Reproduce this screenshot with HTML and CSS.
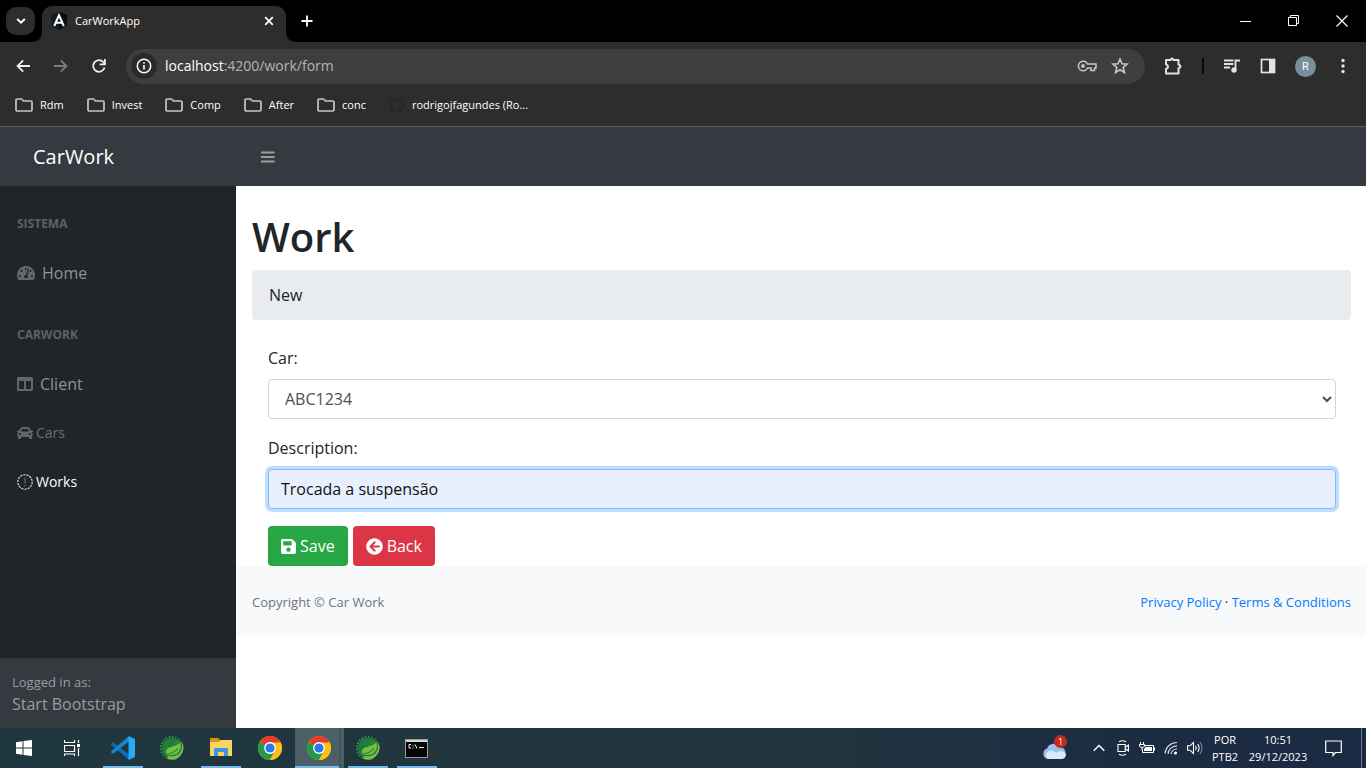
FILE: index.html
```html
<!DOCTYPE html>
<html lang="en">
<head>
<meta charset="utf-8">
<title>CarWorkApp</title>
<link rel="stylesheet" href="styles.css">
</head>
<body>
<svg class="defs" aria-hidden="true">
  <defs>
    <linearGradient id="spring-fill" x1="0" y1="0" x2="1" y2="1"><stop offset=".4" stop-color="#1d7d3c"/><stop offset=".75" stop-color="#77bf43"/></linearGradient>
    <symbol id="folder" viewBox="0 0 18 14"><path d="M1 2.200Q1 1 2.200 1H6.500L8.500 3H15.800Q17 3 17 4.200V11.800Q17 13 15.800 13H2.200Q1 13 1 11.800Z" fill="none" stroke="#c7c7c7" stroke-width="1.700"/></symbol>
    <symbol id="chrome" viewBox="0 0 24 24">
      <circle cx="12" cy="12" r="12" fill="#fbc116"/>
      <path d="M12 12 1.600 6A12 12 0 0 1 22.400 6Z" fill="#e33b2e"/>
      <path d="M12 12 1.600 6A12 12 0 0 0 12 24L17.200 15Z" fill="#229a48"/>
      <path d="M12 6.500H22.600A12 12 0 0 1 12 24L17 14.500Z" fill="#fbc116"/>
      <circle cx="12" cy="12" r="5.900" fill="#fff"/><circle cx="12" cy="12" r="4.600" fill="#2a78e8"/>
    </symbol>
    <symbol id="spring" viewBox="0 0 24 24">
      <circle cx="12" cy="12" r="10" fill="url(#spring-fill)"/>
      <path d="M7 21.700A10.900 10.900 0 1 1 20.500 5.300" fill="none" stroke="#2c8a3c" stroke-width="2.200" stroke-dasharray="1.800 1.400"/>
      <path d="M22 6A12 12 0 0 1 7 22.800L12 12Z" fill="#77bf43"/>
      <path d="M5.500 18C3.500 8 15 12.500 20.500 5 23 11 20.500 18.500 13.500 19.500 10 20 7 19.500 5.500 18Z" fill="#77bf43" stroke="#1d7d3c" stroke-width="1.300"/>
      <path d="M6 18.300C11 17.800 15.500 16 18 12" fill="none" stroke="#2c8a3c" stroke-width="1.200"/>
    </symbol>
  </defs>
</svg>

<header class="browser">
  <div class="tabstrip">
    <button class="tab-search" aria-label="Search tabs"><svg width="10" height="8" viewBox="0 0 10 8"><path d="M1.200 2 5 5.700 8.800 2" fill="none" stroke="#fff" stroke-width="2"/></svg></button>
    <div class="tab">
      <svg width="18" height="18" viewBox="0 0 18 18"><path d="M9 0 17.500 3 16.200 14 9 18 1.800 14 .5 3Z" fill="#151a28"/><path d="M9 0 17.500 3 16.200 14 9 18Z" fill="#080c18"/><path d="M4.200 14 9 3.300 13.800 14M6 10.700H12" fill="none" stroke="#fff" stroke-width="2"/></svg>
      <span class="tab-title">CarWorkApp</span>
      <button class="bare" aria-label="Close tab"><svg width="10" height="10" viewBox="0 0 10 10"><path d="M1.200 1.200 8.800 8.800M8.800 1.200 1.200 8.800" stroke="#fff" stroke-width="1.800"/></svg></button>
    </div>
    <button class="bare new-tab" aria-label="New tab"><svg width="12" height="12" viewBox="0 0 12 12"><path d="M6 .5V11.500M.5 6H11.500" stroke="#fff" stroke-width="1.800"/></svg></button>
    <div class="window-controls">
      <button class="bare" aria-label="Minimize"><svg width="12" height="12" viewBox="0 0 12 12"><path d="M0 6.500H11" stroke="#fff"/></svg></button>
      <button class="bare" aria-label="Restore"><svg width="12" height="12" viewBox="0 0 12 12"><path d="M.5 2.500H8.500V10.500H.5ZM2.500 2.500V.5H10.500V8.500H8.500" fill="none" stroke="#fff"/></svg></button>
      <button class="bare" aria-label="Close"><svg width="12" height="12" viewBox="0 0 12 12"><path d="M.5 .5 11.500 11.500M11.500 .5 .5 11.500" stroke="#fff" stroke-width="1.200"/></svg></button>
    </div>
  </div>

  <div class="toolbar">
    <button class="bare tool" aria-label="Back"><svg width="14" height="14" viewBox="0 0 14 14"><path d="M14 7H2M7.200 1.300 1.500 7 7.200 12.700" fill="none" stroke="#eee" stroke-width="1.800"/></svg></button>
    <button class="bare tool" aria-label="Forward"><svg width="14" height="14" viewBox="0 0 14 14"><path d="M0 7H12M6.800 1.300 12.500 7 6.800 12.700" fill="none" stroke="#7b7b7b" stroke-width="1.800"/></svg></button>
    <button class="bare tool" aria-label="Reload"><svg width="14" height="14" viewBox="0 0 14 14"><path d="M12.600 8.500A5.800 5.800 0 1 1 11.500 3.300L12.800 4.800" fill="none" stroke="#eee" stroke-width="1.800"/><path d="M13.800 0V6.200H7.600V4.500H12V0Z" fill="#eee"/></svg></button>
    <div class="omnibox">
      <button class="site-info" aria-label="Site information"><svg width="16" height="16" viewBox="0 0 16 16"><circle cx="8" cy="8" r="6.700" fill="none" stroke="#fff" stroke-width="1.500"/><path d="M8 7V11.600M8 4.200V5.800" stroke="#fff" stroke-width="1.600"/></svg></button>
      <span class="url"><b>localhost</b>:4200/work/form</span>
      <button class="bare" aria-label="Passwords"><svg width="20" height="12" viewBox="0 0 20 12"><path d="M10.500 4H19V8H17.500V10.500H14V8H10.500A4.800 4.800 0 1 1 10.500 4Z" fill="none" stroke="#c7c7c7" stroke-width="1.500"/><circle cx="6" cy="6" r="1.900" fill="#c7c7c7"/></svg></button>
      <button class="bare" aria-label="Bookmark this page"><svg width="18" height="18" viewBox="0 0 18 18"><path d="M9 2 11 6.700 16 7.100 12.200 10.400 13.400 15.500 9 12.800 4.600 15.500 5.800 10.400 2 7.100 7 6.700Z" fill="none" stroke="#c7c7c7" stroke-width="1.600"/></svg></button>
    </div>
    <div class="extensions">
      <button class="bare" aria-label="Extensions"><svg width="20" height="20" viewBox="0 0 20 20"><path d="M3 4H7.500Q9 1 10.500 4H15.500V8.500Q19.500 10.500 15.500 12.500V17.500H3V13.200Q7 10.700 3 8.200Z" fill="none" stroke="#e3e3e3" stroke-width="2" stroke-linejoin="round"/></svg></button>
      <i class="divider"></i>
      <button class="bare" aria-label="Media"><svg width="18" height="16" viewBox="0 0 18 16"><path d="M1 2.500H10.500M1 6H10.500M1 9.500H7M12.500 12V2.500H17" fill="none" stroke="#e3e3e3" stroke-width="1.800"/><circle cx="11" cy="12" r="2.700" fill="#e3e3e3"/></svg></button>
      <button class="bare" aria-label="Side panel"><svg width="16" height="16" viewBox="0 0 16 16"><rect x="1.500" y="1.500" width="13" height="13" fill="none" stroke="#e3e3e3" stroke-width="1.700"/><path d="M9 1H15V15H9Z" fill="#e3e3e3"/></svg></button>
      <button class="avatar" aria-label="Profile">R</button>
      <button class="bare more" aria-label="Menu"><svg width="4" height="16" viewBox="0 0 4 16"><g fill="#e3e3e3"><circle cx="2" cy="2.500" r="1.700"/><circle cx="2" cy="8" r="1.700"/><circle cx="2" cy="13.500" r="1.700"/></g></svg></button>
    </div>
  </div>

  <nav class="bookmarks" aria-label="Bookmarks">
    <a href="#"><svg width="18" height="14"><use href="#folder"/></svg>Rdm</a>
    <a href="#"><svg width="18" height="14"><use href="#folder"/></svg>Invest</a>
    <a href="#"><svg width="18" height="14"><use href="#folder"/></svg>Comp</a>
    <a href="#"><svg width="18" height="14"><use href="#folder"/></svg>After</a>
    <a href="#"><svg width="18" height="14"><use href="#folder"/></svg>conc</a>
    <a href="#"><svg width="16" height="16" viewBox="0 0 16 16"><path fill="#24292f" d="M8 0C3.580 0 0 3.580 0 8c0 3.540 2.290 6.530 5.470 7.590.4.070.55-.17.55-.38 0-.19-.01-.82-.01-1.490-2.010.37-2.530-.49-2.690-.94-.09-.23-.48-.94-.82-1.130-.28-.15-.68-.52-.01-.53.63-.01 1.080.58 1.230.82.720 1.210 1.870.87 2.330.66.070-.52.280-.87.510-1.070-1.780-.2-3.640-.89-3.640-3.950 0-.87.310-1.590.82-2.150-.08-.2-.36-1.020.08-2.120 0 0 .67-.21 2.200.82.640-.18 1.320-.27 2-.27s1.360.09 2 .27c1.530-1.040 2.200-.82 2.200-.82.440 1.100.16 1.920.08 2.120.51.560.82 1.270.82 2.150 0 3.070-1.870 3.750-3.650 3.950.290.25.54.73.54 1.480 0 1.070-.01 1.930-.01 2.200 0 .21.150.46.55.38A8.010 8.010 0 0 0 16 8c0-4.420-3.580-8-8-8Z"/></svg>rodrigojfagundes (Ro...</a>
  </nav>
</header>

<div class="app">
  <nav class="topnav">
    <a class="brand" href="#">CarWork</a>
    <button class="bare" aria-label="Toggle sidebar"><svg width="14" height="14" viewBox="0 0 14 14"><path d="M0 2.500H13.500M0 7H13.500M0 11.500H13.500" stroke="#9a9da0" stroke-width="2"/></svg></button>
  </nav>
  <div class="columns">
    <aside class="sidebar">
      <nav class="menu">
        <h2>SISTEMA</h2>
        <a class="wide" href="#"><svg width="18" height="16" viewBox="0 0 576 512" fill="#646668"><path d="M288 32C128.940 32 0 160.940 0 320c0 52.800 14.250 102.260 39.060 144.800 5.610 9.620 16.300 15.200 27.440 15.200h443c11.140 0 21.830-5.580 27.440-15.200C561.750 422.260 576 372.800 576 320c0-159.060-128.940-288-288-288zm0 64c14.710 0 26.580 10.130 30.320 23.650-1.110 2.260-2.640 4.230-3.450 6.670l-9.220 27.670c-5.130 3.490-10.970 6.010-17.640 6.010-17.670 0-32-14.330-32-32S270.330 96 288 96zM96 384c-17.670 0-32-14.330-32-32s14.330-32 32-32 32 14.330 32 32-14.330 32-32 32zm48-160c-17.670 0-32-14.330-32-32s14.330-32 32-32 32 14.330 32 32-14.330 32-32 32zm246.770-72.410l-61.330 184C343.130 347.330 352 364.540 352 384c0 11.720-3.380 22.550-8.880 32H232.880c-5.500-9.450-8.880-20.280-8.880-32 0-33.940 26.500-61.430 59.900-63.590l61.340-184.010c4.170-12.560 17.730-19.450 30.360-15.170 12.570 4.190 19.350 17.790 15.170 30.360zm14.660 57.200l15.520-46.550c3.470-1.290 7.130-2.230 11.050-2.230 17.670 0 32 14.330 32 32s-14.330 32-32 32c-11.380-.01-20.890-6.280-26.570-15.220zM480 384c-17.670 0-32-14.330-32-32s14.330-32 32-32 32 14.330 32 32-14.330 32-32 32z"/></svg>Home</a>
        <h2>CARWORK</h2>
        <a class="wide" href="#"><svg width="16" height="16" viewBox="0 0 512 512" fill="#646668"><path d="M464 32H48C21.490 32 0 53.490 0 80v352c0 26.510 21.490 48 48 48h416c26.510 0 48-21.490 48-48V80c0-26.510-21.490-48-48-48zM224 416H64V160h160v256zm224 0H288V160h160v256z"/></svg>Client</a>
        <a class="dim" href="#"><svg width="16" height="16" viewBox="0 0 512 512" fill="#646668"><path d="M499.990 176h-59.870l-16.640-41.600C406.380 91.630 365.570 64 319.500 64h-127c-46.060 0-86.880 27.630-103.990 70.400L71.870 176H12.010C4.200 176-1.530 183.340.37 190.910l6 24C7.700 220.250 12.500 224 18.010 224h20.070C24.650 235.730 16 252.780 16 272v48c0 16.120 6.160 30.670 16 41.930V416c0 17.670 14.330 32 32 32h32c17.670 0 32-14.330 32-32v-32h256v32c0 17.670 14.330 32 32 32h32c17.670 0 32-14.330 32-32v-54.070c9.840-11.250 16-25.800 16-41.930v-48c0-19.220-8.650-36.270-22.070-48H494c5.510 0 10.310-3.750 11.640-9.090l6-24c1.890-7.570-3.840-14.910-11.650-14.910zm-352.060-17.830c7.290-18.220 24.940-30.170 44.570-30.170h127c19.630 0 37.280 11.950 44.570 30.170L384 208H128l19.930-49.830zM96 319.800c-19.200 0-32-12.760-32-31.900S76.800 256 96 256s48 28.710 48 47.850-28.800 15.950-48 15.950zm320 0c-19.200 0-48 3.190-48-15.950S396.800 256 416 256s32 12.760 32 31.900-12.800 31.900-32 31.900z"/></svg>Cars</a>
        <a class="active" href="#"><svg width="16" height="16" viewBox="0 0 16 16"><circle cx="8" cy="8" r="7.200" fill="none" stroke="#e6e6e6" stroke-width="1.100" stroke-dasharray="2.200 1"/><path d="M8 4V9.500M8 11V12.200" stroke="#75787b"/></svg>Works</a>
      </nav>
      <div class="user"><small>Logged in as:</small><span>Start Bootstrap</span></div>
    </aside>
    <div class="content">
      <main>
        <h1>Work</h1>
        <div class="crumb">New</div>
        <form>
          <label for="car">Car:</label>
          <select id="car"><option>ABC1234</option></select>
          <label for="description">Description:</label>
          <input id="description" class="focused" type="text" value="Trocada a suspensão">
          <div class="actions">
            <button class="btn save" type="button"><svg width="15" height="17" viewBox="0 0 448 512" fill="#fff"><path d="M433.941 129.941l-83.882-83.882A48 48 0 0 0 316.118 32H48C21.490 32 0 53.490 0 80v352c0 26.510 21.490 48 48 48h352c26.510 0 48-21.490 48-48V163.882a48 48 0 0 0-14.059-33.941zM224 416c-35.346 0-64-28.654-64-64 0-35.346 28.654-64 64-64s64 28.654 64 64c0 35.346-28.654 64-64 64zm96-304.520V212c0 6.627-5.373 12-12 12H76c-6.627 0-12-5.373-12-12V108c0-6.627 5.373-12 12-12h228.520c3.183 0 6.235 1.264 8.485 3.515l3.480 3.480A11.996 11.996 0 0 1 320 111.480z"/></svg>Save</button>
            <button class="btn back" type="button"><svg width="17" height="17" viewBox="0 0 512 512" fill="#fff"><path d="M256 504C119 504 8 393 8 256S119 8 256 8s248 111 248 248-111 248-248 248zm28.900-143.600L209.400 288H392c13.300 0 24-10.700 24-24v-16c0-13.300-10.700-24-24-24H209.400l75.500-72.400c9.700-9.300 9.900-24.800.4-34.300l-11-10.900c-9.400-9.400-24.600-9.400-33.900 0L107.700 239c-9.400 9.400-9.400 24.600 0 33.900l132.700 132.700c9.400 9.400 24.600 9.400 33.900 0l11-10.900c9.500-9.500 9.300-25-.4-34.300z"/></svg>Back</button>
          </div>
        </form>
      </main>
      <footer class="footer">
        <span>Copyright © Car Work</span>
        <div class="legal"><a href="#">Privacy Policy</a> · <a href="#">Terms &amp; Conditions</a></div>
      </footer>
    </div>
  </div>
</div>

<div class="taskbar">
  <div class="system">
    <button class="bare" aria-label="Start"><svg width="16" height="16" viewBox="0 0 16 16"><path d="M0 2.200 6.500 1.200V7.500H0ZM7.500 1 16 0V7.500H7.500ZM0 8.500H6.500V14.800L0 13.800ZM7.500 8.500H16V16L7.500 15Z" fill="#fff"/></svg></button>
    <button class="bare" aria-label="Task view"><svg width="16" height="16" viewBox="0 0 16 16"><path d="M.5 0V2.500H10.500V0M.5 5.500H10.500V11.500H.5ZM.5 16V14H10.500V16M14.500 0V3M14.500 8V16" fill="none" stroke="#fff" stroke-width="1.200"/><path d="M13 4H16V7H13Z" fill="#fff"/></svg></button>
  </div>
  <div class="pinned">
    <button class="bare open" aria-label="Visual Studio Code"><svg width="24" height="24" viewBox="0 0 24 24"><path d="M2 6.300 18 18.500V24L.3 8.700Q-.2 8 .5 7.300Z" fill="#0b70b8"/><path d="M2 17.700 18 5.500V0L.3 15.300Q-.2 16 .5 16.700Z" fill="#1687cf"/><path d="M17.500 0 24 3V21L17.500 24Z" fill="#27a9f3"/></svg></button>
    <button class="bare" aria-label="Spring Tools"><svg width="24" height="24"><use href="#spring"/></svg></button>
    <button class="bare open" aria-label="File Explorer"><svg width="22" height="20" viewBox="0 0 22 20"><path d="M0 0H8L10 2H21V10H0Z" fill="#d9960e"/><path d="M0 4H9L11 2H22V18H0Z" fill="#fbd265"/><path d="M4 18V11Q4 10 5 10H17Q18 10 18 11V18H14V14H8V18Z" fill="#3c97dc"/></svg></button>
    <button class="bare" aria-label="Chrome"><svg width="24" height="24"><use href="#chrome"/></svg></button>
    <button class="bare open current" aria-label="Chrome, CarWorkApp"><svg width="24" height="24"><use href="#chrome"/></svg></button>
    <button class="bare open" aria-label="Spring Tools window"><svg width="24" height="24"><use href="#spring"/></svg></button>
    <button class="bare open" aria-label="Command Prompt"><svg width="23" height="19" viewBox="0 0 23 19"><rect x=".5" y=".5" width="22" height="18" fill="#050505" stroke="#9a9a9a"/><path d="M1 1H22V3H1Z" fill="#d6d6d6"/><path d="M6 5.500H4V9H6M8 6V7M8 8.500V9.500M10 5.500 12 9.500M14 8.500H19" fill="none" stroke="#eee"/></svg></button>
  </div>
  <div class="tray">
    <button class="bare weather" aria-label="Weather"><svg width="26" height="24" viewBox="0 0 26 24"><path d="M5.500 23A5.500 5.500 0 0 1 5 12.500 7.500 7.500 0 0 1 18.500 11.500 6 6 0 0 1 20 23Z" fill="#9cc0f2"/><path d="M5.500 23A5 5 0 0 1 6 15.500 6 6 0 0 1 14 17 6 6 0 0 1 24 19 5 5 0 0 1 20 23Z" fill="#dce9fb"/></svg><span class="count">1</span></button>
    <button class="bare" aria-label="Hidden icons"><svg width="12" height="8" viewBox="0 0 12 8"><path d="M.7 6.700 6 1.400 11.300 6.700" fill="none" stroke="#fff" stroke-width="1.400"/></svg></button>
    <button class="bare" aria-label="Meet Now"><svg width="12" height="16" viewBox="0 0 12 16"><path d="M2 1.800Q5.500-.2 9 1.800M2 14.200Q5.500 16.200 9 14.200M1 4.500H8.200V11.500H1ZM8.500 7 11.400 5V11L8.500 9" fill="none" stroke="#fff" stroke-width="1.100"/></svg></button>
    <button class="bare" aria-label="Battery"><svg width="16" height="12" viewBox="0 0 16 12"><path d="M5.500 3.500H14.500V10.500H3.500V7M1.500 0V2M4.500 0V2M.5 2.500H5.500V4Q5 5.500 3 5.500 1 5.500.5 4ZM3 5.500V8" fill="none" stroke="#fff"/><path d="M6 5H13V9H5V7L6 6ZM15 5.500H16V8.500H15Z" fill="#fff"/></svg></button>
    <button class="bare" aria-label="Network"><svg width="14" height="14" viewBox="0 0 14 14"><path d="M1 12.500A12 12 0 0 1 13 1.500M4 13A9 9 0 0 1 13 4.800M7 13A6 6 0 0 1 13 8" fill="none" stroke="#dce0e5" stroke-width="1.200"/><circle cx="11.500" cy="12" r="1.600" fill="#fff"/></svg></button>
    <button class="bare" aria-label="Volume"><svg width="16" height="14" viewBox="0 0 16 14"><path d="M.6 4.800H3L6.500 1.500V12.500L3 9.200H.6ZM8.500 4.800Q10 7 8.500 9.200M10.700 3Q13.500 7 10.700 11" fill="none" stroke="#fff" stroke-width="1.100"/><path d="M13 1Q17 7 13 13" fill="none" stroke="#8490a0"/></svg></button>
    <button class="bare lang"><span>POR</span><span>PTB2</span></button>
    <button class="bare clock"><span>10:51</span><span>29/12/2023</span></button>
    <button class="bare notes" aria-label="Notifications"><svg width="17" height="17" viewBox="0 0 17 17"><path d="M.7 1H16.300V12.500H10.500L8 15.500V12.500H.7Z" fill="none" stroke="#fff" stroke-width="1.200"/></svg></button>
  </div>
</div>
</body>
</html>
```

FILE: styles.css
```css
* { box-sizing: border-box; }

body {
  margin: 0;
  min-height: 100vh;
  display: flex;
  flex-direction: column;
  font: 16px/24px "Open Sans", "Noto Sans", sans-serif;
  color: #212529;
  background: #fff;
}

button, input, select { font: inherit; }
a { color: inherit; text-decoration: none; }
svg { display: block; flex: none; }
.defs { position: absolute; width: 0; height: 0; }

.bare {
  display: flex;
  align-items: center;
  justify-content: center;
  padding: 0;
  border: 0;
  background: none;
  color: #fff;
}

/* Browser chrome */
.browser { background: #2d2d2d; border-bottom: 1px solid #5b5b5b; color: #fff; }
.tabstrip { display: flex; height: 42px; padding-left: 6px; background: #000; }
.tab-search {
  display: flex;
  align-items: center;
  justify-content: center;
  width: 29px;
  height: 28px;
  margin: 7px 7px 0 0;
  padding: 0;
  border: 0;
  border-radius: 10px;
  background: #2d2d2d;
}
.tab {
  position: relative;
  display: flex;
  align-items: center;
  gap: 7px;
  width: 244px;
  height: 36px;
  margin-top: 6px;
  padding: 0 12px 6px 8px;
  border-radius: 10px 10px 0 0;
  background: #2d2d2d;
}
.tab::before, .tab::after {
  content: "";
  position: absolute;
  bottom: 0;
  width: 8px;
  height: 8px;
}
.tab::before { right: 100%; background: radial-gradient(circle at 0 0, #000 7px, #2d2d2d 8px); }
.tab::after { left: 100%; background: radial-gradient(circle at 100% 0, #000 7px, #2d2d2d 8px); }
.tab-title { flex: 1; font-size: 11px; }
.new-tab { width: 42px; }
.window-controls { display: flex; margin-left: auto; }
.window-controls .bare { width: 48px; }

.toolbar { display: flex; align-items: center; height: 48px; padding-left: 4px; }
.tool { width: 38px; height: 34px; }
.omnibox {
  flex: 1;
  display: flex;
  align-items: center;
  gap: 14px;
  height: 35px;
  margin-left: 8px;
  padding: 0 16px 0 5px;
  border-radius: 18px;
  background: #3e3e3e;
}
.site-info {
  display: flex;
  align-items: center;
  justify-content: center;
  width: 26px;
  height: 26px;
  margin-right: -6px;
  padding: 0;
  border: 0;
  border-radius: 50%;
  background: #2b2b2b;
}
.url { flex: 1; font-size: 14px; color: #b5b5b5; }
.url b { font-weight: 400; color: #fff; }
.extensions { display: flex; align-items: center; gap: 19px; padding: 0 15px 0 18px; }
.more { width: 16px; }
.divider { width: 2px; height: 16px; background: #0c0c0c; }
.avatar {
  width: 21px;
  height: 21px;
  padding: 0;
  border: 0;
  border-radius: 50%;
  background: #78909c;
  color: #fff;
  font: 11px/21px Roboto, sans-serif;
}

.bookmarks { display: flex; align-items: center; gap: 23px; height: 36px; padding: 0 15px 6px; }
.bookmarks a { display: flex; align-items: center; gap: 7px; font-size: 11px; }

/* Application */
.app { flex: 1; display: flex; flex-direction: column; }
.topnav { display: flex; align-items: center; height: 59px; background: #343a40; }
.brand { width: 236px; padding-left: 33px; font-size: 20px; color: #fff; }
.topnav .bare { width: 64px; height: 40px; }
.columns { flex: 1; display: flex; }

.sidebar { display: flex; flex-direction: column; width: 236px; background: #212529; }
.menu { flex: 1; }
.menu h2 { margin: 0; padding: 29px 17px 15px; font-size: 12px; line-height: 18px; font-weight: 700; color: #5e6163; }
.menu a { display: flex; align-items: center; gap: 3px; height: 49px; padding: 0 17px; font-size: 14px; color: #909294; }
.menu .wide { gap: 7px; font-size: 16px; }
.menu .dim { color: #6b6d70; }
.menu .active { color: #fff; }
.user { display: flex; flex-direction: column; padding: 13px 12px; background: #343a40; color: #999c9f; line-height: 22px; }
.user small { font-size: 13px; }

.content { flex: 1; min-width: 0; }
main { padding: 26px 15px 0 16px; }
h1 { margin: 0 0 8px; font-size: 40px; line-height: 50px; font-weight: 600; }
.crumb { padding: 13px 17px; border-radius: 4px; background: #e9ecef; }
form { padding: 26px 15px 0 16px; }
label { display: block; margin-bottom: 9px; }
select, input {
  display: block;
  width: 100%;
  height: 40px;
  margin-bottom: 17px;
  padding: 0 12px;
  border: 1px solid #ced4da;
  border-radius: 4px;
  background: #fff;
  color: #495057;
}
.focused {
  outline: 0;
  border-color: #80bdff;
  background: #e8f0fe;
  color: #111;
  box-shadow: 0 0 0 3px #bfdeff;
}
.actions { display: flex; gap: 5px; }
.btn {
  display: flex;
  align-items: center;
  gap: 4px;
  height: 40px;
  padding: 0 13px;
  border: 0;
  border-radius: 4px;
  color: #fff;
}
.save { background: #28a745; }
.back { background: #dc3545; }

.footer {
  display: flex;
  align-items: center;
  justify-content: space-between;
  min-height: 70px;
  padding: 2px 15px 0 16px;
  background: #f8f9fa;
  font-size: 13px;
  color: #6c757d;
}
.legal { color: #212529; }
.legal a { color: #007bff; }

/* Desktop taskbar */
.taskbar { display: flex; height: 40px; background: linear-gradient(90deg, #21373f, #20353f 60%, #1b2b42 85%, #1b2a43); color: #fff; }
.system, .pinned, .tray { display: flex; }
.system .bare { width: 48px; }
.pinned { margin-left: 3px; }
.pinned .bare { position: relative; width: 49px; padding-right: 2px; }
.open::after { content: ""; position: absolute; bottom: 0; left: 4px; right: 5px; height: 2px; background: #76b9ed; }
.pinned .current { background: linear-gradient(90deg, #4d5f66 44px, #34474e 44px, #4d5f66 46px); }
.pinned .current::after { left: 0; }
.tray { margin-left: auto; margin-right: 4px; padding-right: 8px; border-right: 1px solid #6a7687; }
.tray .bare { width: 24px; }
.tray .weather { position: relative; width: 48px; margin-right: 8px; }
.count {
  position: absolute;
  top: 7px;
  right: 12px;
  width: 13px;
  height: 13px;
  border-radius: 50%;
  background: #c42b1c;
  font-size: 9px;
  line-height: 13px;
}
.tray .lang, .tray .clock { flex-direction: column; width: 36px; font-size: 11px; line-height: 17px; }
.tray .clock { width: 70px; }
.tray .notes { width: 40px; }
```
